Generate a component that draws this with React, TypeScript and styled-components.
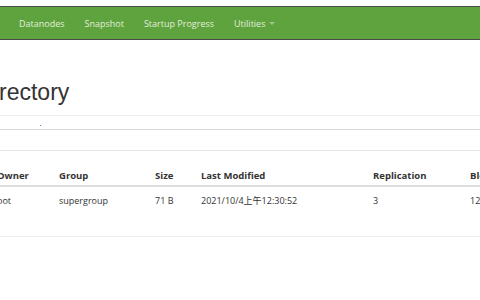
import styled, { createGlobalStyle } from 'styled-components'

const GlobalStyle = createGlobalStyle`
  html, body {
    margin: 0;
    padding: 0;
    background: #fff;
    overflow: hidden;
  }
  body {
    font-family: "Open Sans", "Noto Sans CJK SC", sans-serif;
    color: #333;
  }
`

const Page = styled.div`
  width: 480px;
  height: 300px;
  overflow: hidden;
  padding-top: 6px;
  box-sizing: border-box;
`

const NavBar = styled.nav`
  display: flex;
  align-items: center;
  height: 32px;
  background-color: #5fa33e;
  border-top: 1px solid #4a4a4a;
  border-bottom: 1px solid #4a4a4a;
  padding-left: 19px;
`

const NavItem = styled.a<{ $gap: number }>`
  font-size: 9px;
  color: #e3eedb;
  margin-right: ${(p) => p.$gap}px;
  text-decoration: none;
  display: flex;
  align-items: center;
`

const Caret = styled.span`
  display: inline-block;
  margin-left: 4px;
  width: 0;
  height: 0;
  border-left: 3px solid transparent;
  border-right: 3px solid transparent;
  border-top: 3px solid #9fc48a;
`

const Title = styled.h1`
  margin: 38px 0 0 -1px;
  font-family: "Liberation Sans", Arial, sans-serif;
  font-weight: 400;
  font-size: 23px;
  line-height: 28px;
  color: #333;
`

const Toolbar = styled.div`
  margin-top: 9px;
  height: 13px;
  border-top: 1px solid #eeeeee;
  border-bottom: 1px solid #d8d8d8;
  display: flex;
  align-items: center;
  padding-left: 40px;
`

const Dot = styled.span`
  width: 1px;
  height: 1px;
  background: #7070ff;
  margin-top: 5px;
`

const Table = styled.div`
  margin-top: 20px;
  border-top: 1px solid #e6e6e6;
  border-bottom: 1px solid #eeeeee;
  height: 85px;
`

const Row = styled.div<{ $head?: boolean }>`
  display: grid;
  grid-template-columns: 62px 96px 46px 172px 97px 80px;
  margin-left: -3px;
  align-items: end;
  height: ${(p) => (p.$head ? 36 : 20)}px;
  padding: ${(p) => (p.$head ? '0 0 3px' : '8px 0 0')};
  box-sizing: border-box;
  border-bottom: ${(p) => (p.$head ? '2px solid #dddddd' : 'none')};
  font-size: ${(p) => (p.$head ? 9.5 : 9)}px;
  line-height: 12px;
  font-weight: ${(p) => (p.$head ? 700 : 400)};
  white-space: nowrap;
  color: #333;
`

const Cell = styled.div`
  overflow: visible;
`

const headers = ['Owner', 'Group', 'Size', 'Last Modified', 'Replication', 'Block Size']
const rows = [['oot', 'supergroup', '71 B', '2021/10/4上午12:30:52', '3', '128 MB']]

export default function App() {
  return (
    <Page>
      <GlobalStyle />
      <NavBar>
        <NavItem $gap={20}>Datanodes</NavItem>
        <NavItem $gap={20}>Snapshot</NavItem>
        <NavItem $gap={20}>Startup Progress</NavItem>
        <NavItem $gap={0}>
          Utilities
          <Caret />
        </NavItem>
      </NavBar>
      <Title>rectory</Title>
      <Toolbar>
        <Dot />
      </Toolbar>
      <Table>
        <Row $head>
          {headers.map((h) => (
            <Cell key={h}>{h}</Cell>
          ))}
        </Row>
        {rows.map((r, i) => (
          <Row key={i}>
            {r.map((c, j) => (
              <Cell key={j}>{c}</Cell>
            ))}
          </Row>
        ))}
      </Table>
    </Page>
  )
}
